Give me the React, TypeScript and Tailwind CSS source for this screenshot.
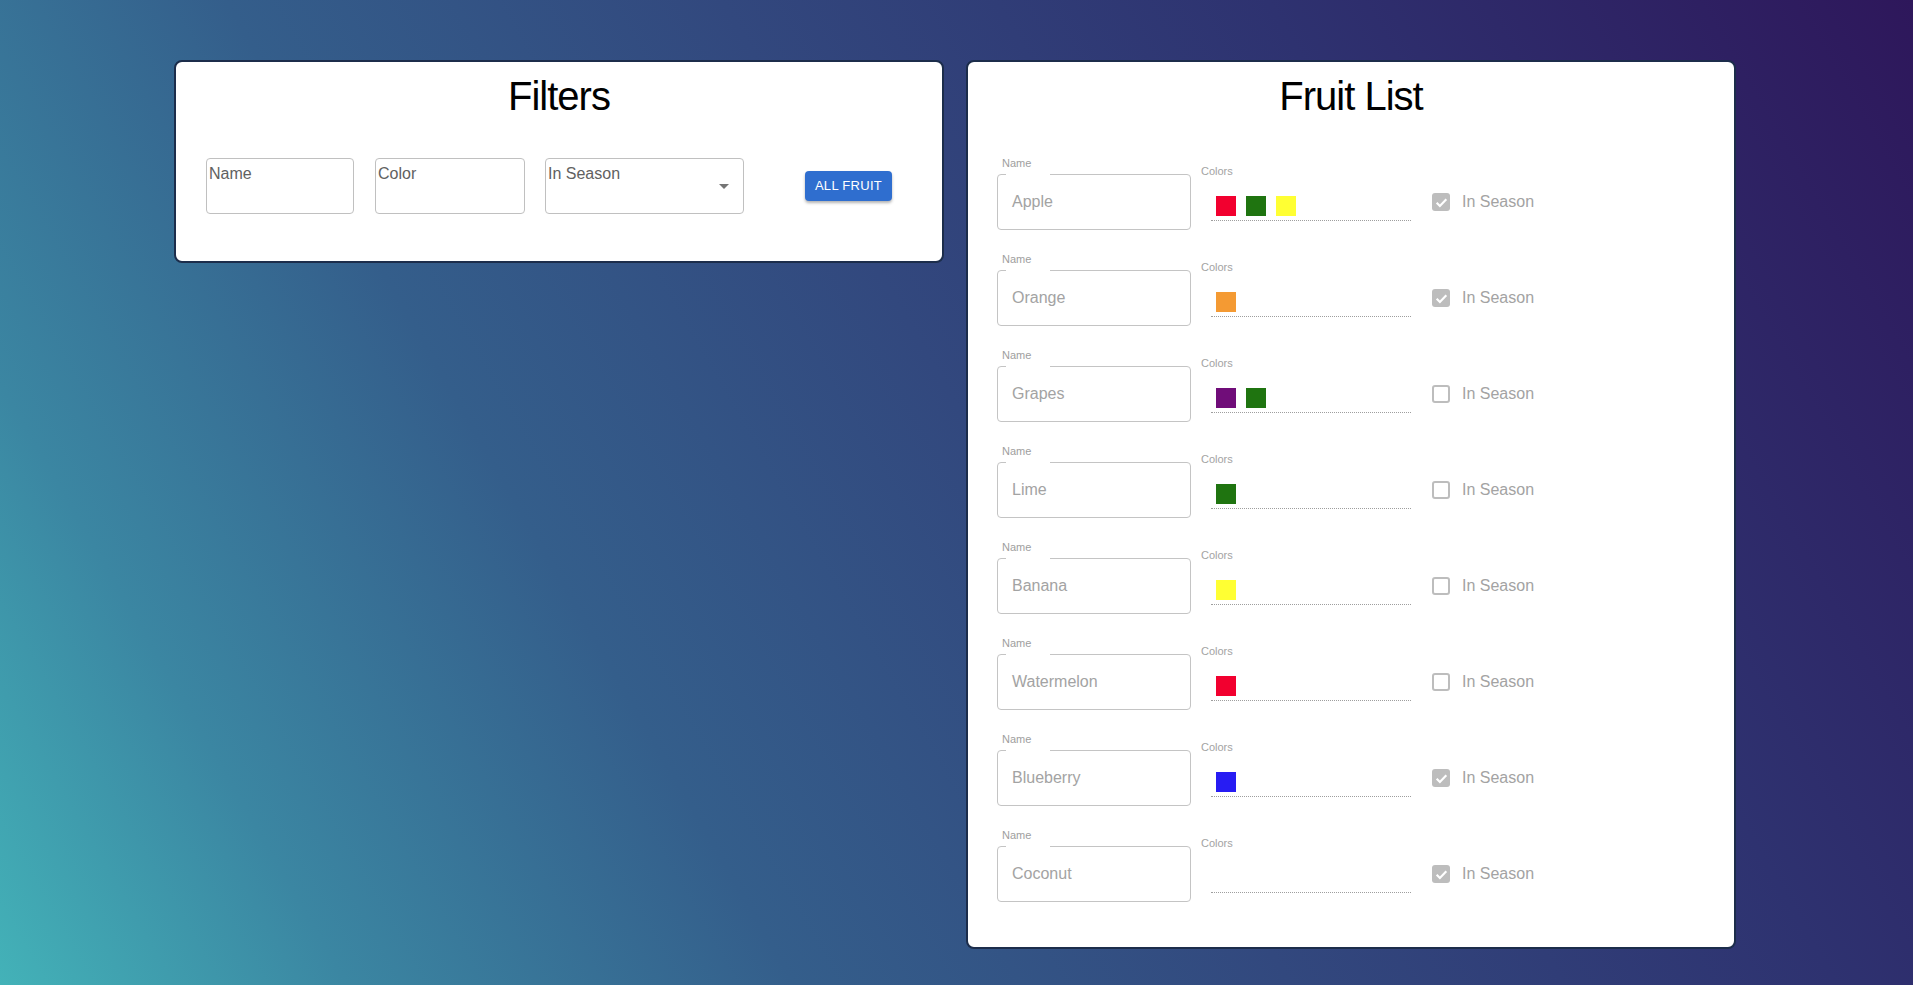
import React from "react";

type Fruit = { name: string; colors: string[]; inSeason: boolean };

const RED = "#f2002f";
const GREEN = "#1f7410";
const YELLOW = "#ffff33";
const ORANGE = "#f49a33";
const PURPLE = "#700d79";
const BLUE = "#271cf3";

const fruits: Fruit[] = [
  { name: "Apple", colors: [RED, GREEN, YELLOW], inSeason: true },
  { name: "Orange", colors: [ORANGE], inSeason: true },
  { name: "Grapes", colors: [PURPLE, GREEN], inSeason: false },
  { name: "Lime", colors: [GREEN], inSeason: false },
  { name: "Banana", colors: [YELLOW], inSeason: false },
  { name: "Watermelon", colors: [RED], inSeason: false },
  { name: "Blueberry", colors: [BLUE], inSeason: true },
  { name: "Coconut", colors: [], inSeason: true },
];

function Checkbox({ checked }: { checked: boolean }) {
  if (checked) {
    return (
      <div className="w-[18px] h-[18px] rounded-[3px] bg-[#bdbdbd] flex items-center justify-center">
        <svg width="15" height="15" viewBox="0 0 14 14">
          <path d="M2.5 7.3l3 3L11.5 4" fill="none" stroke="#ffffff" strokeWidth="2" />
        </svg>
      </div>
    );
  }
  return <div className="w-[18px] h-[18px] rounded-[3px] border-2 border-[#bdbdbd] bg-white" />;
}

function FruitRow({ fruit }: { fruit: Fruit }) {
  return (
    <div className="flex items-start">
      <div className="flex flex-col">
        <div className="h-[18px] pl-[5px] text-[11px] leading-[14px] text-[#9e9e9e]">Name</div>
        <div className="relative w-[194px] h-[56px] border border-[#c4c4c4] rounded-[4px] flex items-center pl-[14px] text-[16px] text-[#a3a3a3]">
          <span className="absolute -top-px left-[8px] w-[44px] h-[2px] bg-white" />
          {fruit.name}
        </div>
      </div>
      <div className="ml-[10px] flex flex-col">
        <div className="mt-[8px] text-[11px] leading-[14px] text-[#a3a3a3]">Colors</div>
        <div className="ml-[10px] mt-[18px] w-[200px] pl-[5px] pb-[4px] border-b border-dotted border-[#9e9e9e] flex gap-[10px] h-[25px]">
          {fruit.colors.map((c, i) => (
            <div key={i} className="w-[20px] h-[20px]" style={{ backgroundColor: c }} />
          ))}
        </div>
      </div>
      <div className="ml-[21px] mt-[18px] h-[56px] flex items-center">
        <Checkbox checked={fruit.inSeason} />
        <span className="ml-[12px] text-[16px] text-[#a3a3a3]">In Season</span>
      </div>
    </div>
  );
}

export default function App() {
  return (
    <div
      className="w-full h-screen overflow-hidden bg-[linear-gradient(60deg,#43b2b8_0%,#3b86a2_14%,#345e8b_32%,#32487e_52%,#2e3270_74%,#2e175b_100%)] flex justify-start items-start gap-[22px] pt-[60px] pl-[174px]"
      style={{ fontFamily: '"Liberation Sans", Arial, Helvetica, sans-serif' }}
    >
      <div className="w-[770px] shrink-0 bg-white border-2 border-[#1c2d4b] rounded-[8px] pb-[47px]">
        <h1 className="pt-[10px] text-center text-[40px] leading-[48px] tracking-[-1px] text-black">Filters</h1>
        <div className="mt-[38px] pl-[30px] flex items-center">
          <div className="w-[148px] h-[56px] border border-[#c0c0c0] rounded-[4px] pt-[5px] pl-[2px] text-[16px] leading-[20px] text-[#616161]">
            Name
          </div>
          <div className="ml-[21px] w-[150px] h-[56px] border border-[#c0c0c0] rounded-[4px] pt-[5px] pl-[2px] text-[16px] leading-[20px] text-[#616161]">
            Color
          </div>
          <div className="relative ml-[20px] w-[199px] h-[56px] border border-[#c0c0c0] rounded-[4px] pt-[5px] pl-[2px] text-[16px] leading-[20px] text-[#616161]">
            In Season
            <svg className="absolute right-[14px] top-[25px]" width="10" height="5" viewBox="0 0 10 5">
              <path d="M0 0h10L5 5z" fill="#757575" />
            </svg>
          </div>
          <button className="ml-[61px] w-[87px] h-[30px] rounded-[4px] bg-[#2f6ecf] text-white text-[13px] tracking-[0.3px] shadow-[0_2px_3px_rgba(0,0,0,0.3)]">
            ALL FRUIT
          </button>
        </div>
      </div>
      <div className="w-[770px] shrink-0 bg-white border-2 border-[#1c2d4b] rounded-[8px] pb-[45px]">
        <h1 className="pt-[10px] text-center text-[40px] leading-[48px] tracking-[-1px] text-black">Fruit List</h1>
        <div className="mt-[36px] pl-[29px] flex flex-col gap-[22px]">
          {fruits.map((f) => (
            <FruitRow key={f.name} fruit={f} />
          ))}
        </div>
      </div>
    </div>
  );
}
